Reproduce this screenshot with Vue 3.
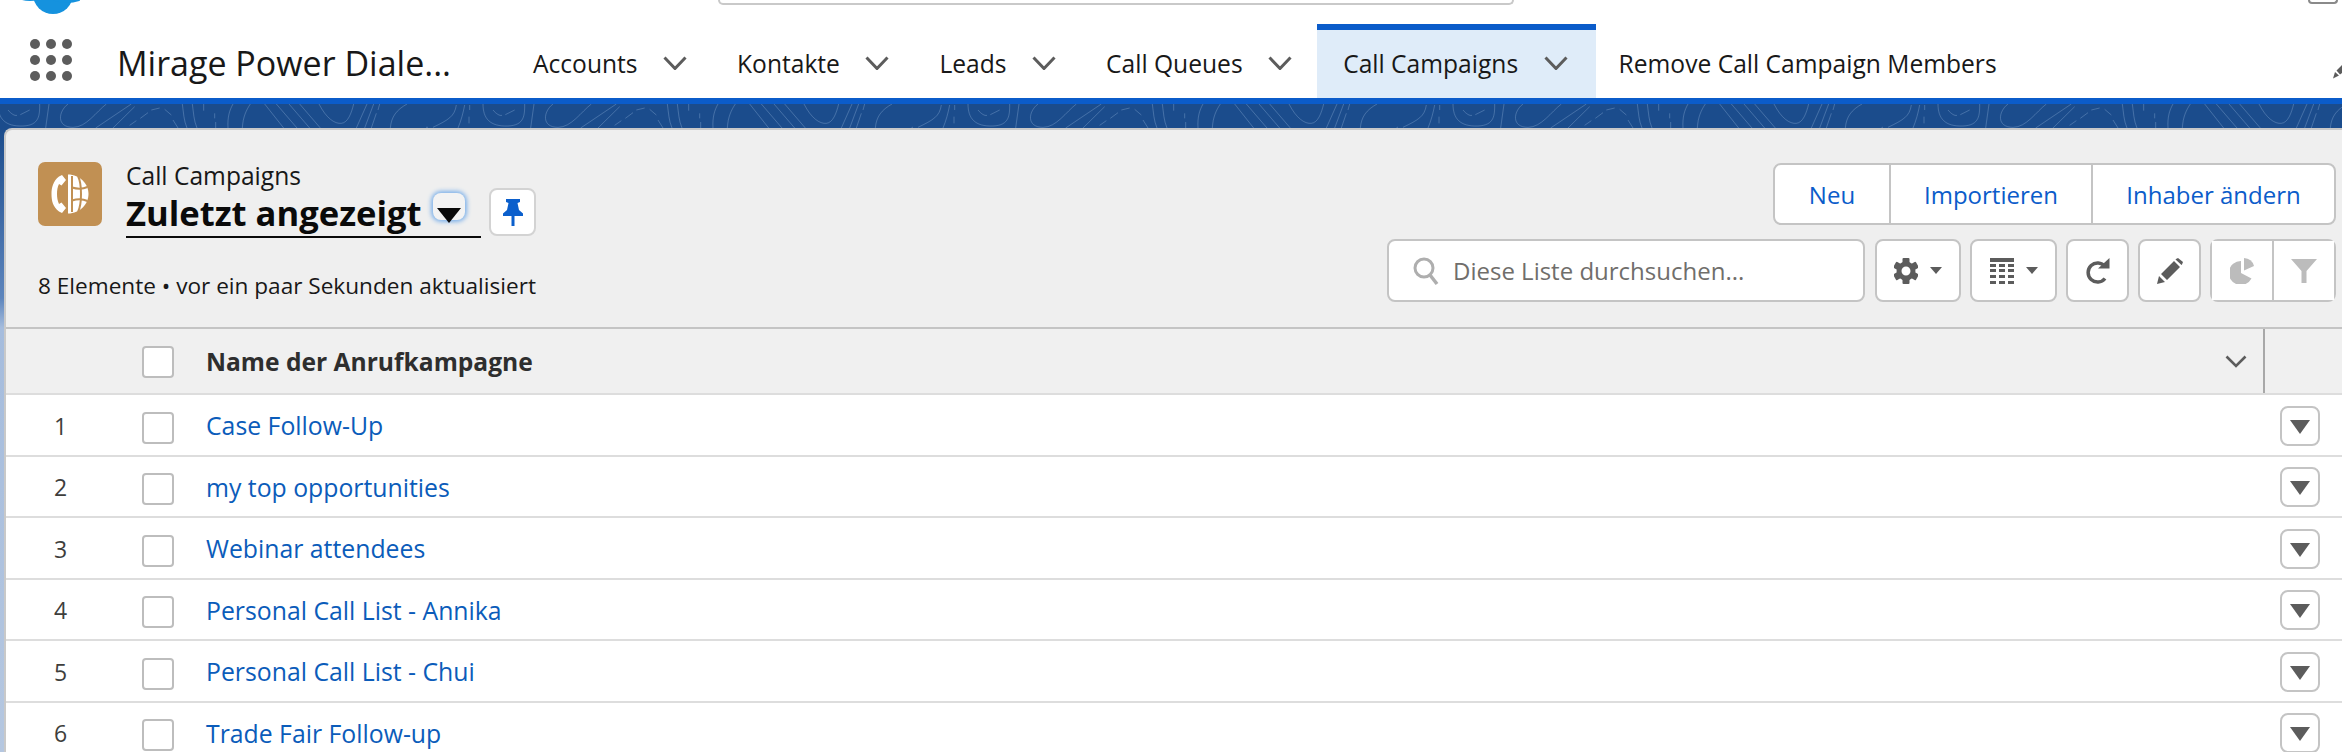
<script setup>
const navItems = [
  { label: 'Accounts', chevron: true },
  { label: 'Kontakte', chevron: true },
  { label: 'Leads', chevron: true },
  { label: 'Call Queues', chevron: true },
  { label: 'Call Campaigns', chevron: true, active: true }
]
const rows = [
  'Case Follow-Up',
  'my top opportunities',
  'Webinar attendees',
  'Personal Call List - Annika',
  'Personal Call List - Chui',
  'Trade Fair Follow-up'
]
const gearTeeth = [0, 60, 120, 180, 240, 300]
</script>

<template>
  <div class="page">
    <div class="top-strip">
      <svg class="logo" width="60" height="16" viewBox="0 0 60 16">
        <circle cx="33" cy="-6" r="20" fill="#1592de" />
        <ellipse cx="10" cy="-3" rx="12" ry="4" fill="#1592de" />
        <ellipse cx="47" cy="-3" rx="16" ry="6" fill="#1592de" />
      </svg>
      <div class="global-search"></div>
      <div class="avatar-arc"></div>
    </div>

    <nav class="nav">
      <svg class="launcher" width="44" height="44" viewBox="0 0 44 44">
        <g fill="#5c5c5c">
          <circle cx="6" cy="6" r="5" /><circle cx="22" cy="6" r="5" /><circle cx="38" cy="6" r="5" />
          <circle cx="6" cy="22" r="5" /><circle cx="22" cy="22" r="5" /><circle cx="38" cy="22" r="5" />
          <circle cx="6" cy="38" r="5" /><circle cx="22" cy="38" r="5" /><circle cx="38" cy="38" r="5" />
        </g>
      </svg>
      <div class="app-name">Mirage Power Diale...</div>
      <a v-for="item in navItems" :key="item.label" class="nav-item" :class="{ active: item.active }">
        <span>{{ item.label }}</span>
        <svg class="chev" width="24" height="14" viewBox="0 0 24 14">
          <path d="M1.500 1.500 12 12.500 22.500 1.500" fill="none" stroke="#5c5c5c" stroke-width="3" />
        </svg>
      </a>
      <a class="nav-item plain"><span>Remove Call Campaign Members</span></a>
      <svg class="nav-edit" width="9" height="16" viewBox="0 0 9 16">
        <path d="M0 15.500 2 9 6 12.500Z M3.500 7.500 9 2V10L7 11.500Z" fill="#5c5c5c" />
      </svg>
    </nav>

    <div class="brand-line"></div>

    <svg class="banner" width="2342" height="24">
      <defs>
        <pattern id="woodgrain" patternUnits="userSpaceOnUse" width="1455" height="72" patternTransform="translate(428 0) scale(0.33333)">
          <g transform="translate(-40 -12)" fill="none" stroke="#7fa3cc" stroke-opacity="0.42" stroke-width="3">
            <path d="M55 82C100 60 120 50 125 15" />
            <path d="M150 15C145 40 140 60 130 84" />
            <path d="M165 15V30M163 50V70" />
            <path d="M205 12C205 55 225 80 280 78C330 76 330 45 330 12" />
            <path d="M235 30C245 42 255 48 262 46M272 44 300 30" />
            <path d="M358 12 348 84" />
            <path d="M415 12C385 35 380 82 430 82C470 82 500 35 530 12" />
            <path d="M498 84 605 12M550 84 615 20" />
            <path d="M600 76 620 62M632 55 655 38M665 30 690 24M705 28 725 45M730 60 745 84" />
            <path d="M758 12C762 40 762 60 772 84M788 12C792 40 792 60 802 84" />
            <path d="M822 12V32M855 40V55M858 66V84" />
            <path d="M895 84C893 50 900 30 910 12M938 84C940 50 950 30 962 12" />
            <path d="M1005 12 1062 84M1040 12 1102 84M1078 12 1140 84M1110 12 1172 84" />
            <path d="M1168 12C1190 55 1215 72 1235 70C1255 68 1265 40 1272 12" />
            <path d="M1280 84 1312 12M1305 84 1332 12M1325 84 1340 40M1345 30 1350 12" />
            <path d="M1382 84C1385 50 1400 30 1432 12" />
            <path d="M1490 84 1530 60" />
          </g>
        </pattern>
      </defs>
      <rect width="2342" height="24" fill="#1b4c8c" />
      <rect width="2342" height="24" fill="url(#woodgrain)" />
    </svg>

    <main class="stage">
      <section class="panel">
        <header class="list-head">
          <div class="head-left">
            <div class="title-row">
              <span class="object-icon">
                <svg width="38" height="40" viewBox="0 0 38 40">
                  <path d="M11 1 8 2.500C2 7 .500 14 .500 20C.500 27 2 33 8 37.500L11 39 15 34 10.500 28.500 8 30C6.500 27 6 23 6 20C6 16 6.500 13 8 10L10.500 11.500 15 6Z" fill="#fff" />
                  <path d="M17 .500C29 .500 37.500 10 37.500 20C37.500 30 29 39.500 17 39.500Z" fill="#fff" />
                  <path d="M27 2C31 10 31 30 27 38" fill="none" stroke="#c19053" stroke-width="2" />
                  <path d="M21 13.500C26 15 32 15 36.500 13M21 26.500C26 25 32 25 36.500 27" fill="none" stroke="#c19053" stroke-width="2" />
                  <path d="M21 2V38" fill="none" stroke="#c19053" stroke-width="2" />
                </svg>
              </span>
              <div class="title-block">
                <div class="object-name">Call Campaigns</div>
                <div class="view-line">
                  <h1 class="view-name">Zuletzt angezeigt</h1>
                  <span class="view-menu">
                    <svg width="24" height="15" viewBox="0 0 24 15"><path d="M0 0H24L12 15Z" fill="#0a0a0a" /></svg>
                  </span>
                </div>
              </div>
              <button class="pin-btn">
                <svg width="20" height="27" viewBox="0 0 20 27">
                  <path d="M3 0H17V3L14.500 4 16 11 20 14.500V17H11.500V27H8.500V17H0V14.500L4 11 5.500 4 3 3Z" fill="#0b5fcc" />
                </svg>
              </button>
            </div>
            <div class="status">8 Elemente • vor ein paar Sekunden aktualisiert</div>
          </div>

          <div class="head-right">
            <div class="actions">
              <a class="act act-new">Neu</a>
              <a class="act act-import">Importieren</a>
              <a class="act act-owner">Inhaber ändern</a>
            </div>
            <div class="toolbar">
              <div class="search">
                <svg width="26" height="30" viewBox="0 0 26 30">
                  <circle cx="11" cy="12" r="9" fill="none" stroke="#aeaeae" stroke-width="3" />
                  <path d="M17 19 24 28" stroke="#aeaeae" stroke-width="3.500" />
                </svg>
                <span>Diese Liste durchsuchen...</span>
              </div>
              <button class="tool tool-gear">
                <svg width="24" height="26" viewBox="-12 -13 24 26">
                  <g fill="#5c5c5c">
                    <rect v-for="a in gearTeeth" :key="a" x="-3.500" y="-13" width="7" height="6" rx="1" :transform="`rotate(${a})`" />
                  </g>
                  <circle r="7" fill="none" stroke="#5c5c5c" stroke-width="5" />
                </svg>
                <svg class="caret" width="12" height="7" viewBox="0 0 12 7"><path d="M0 0H12L6 7Z" fill="#5c5c5c" /></svg>
              </button>
              <button class="tool tool-table">
                <svg width="24" height="26" viewBox="0 0 24 26">
                  <path d="M0 0H24V4H0Z" fill="#5c5c5c" />
                  <g fill="#5c5c5c">
                    <path d="M0 6H6V9H0ZM9 6H15V9H9ZM18 6H24V9H18Z" />
                    <path d="M0 11H6V14H0ZM9 11H15V14H9ZM18 11H24V14H18Z" />
                    <path d="M0 17H6V20H0ZM9 17H15V20H9ZM18 17H24V20H18Z" />
                    <path d="M0 23H6V26H0ZM9 23H15V26H9ZM18 23H24V26H18Z" />
                  </g>
                </svg>
                <svg class="caret" width="12" height="7" viewBox="0 0 12 7"><path d="M0 0H12L6 7Z" fill="#5c5c5c" /></svg>
              </button>
              <button class="tool tool-icon">
                <svg width="24" height="26" viewBox="0 0 24 26">
                  <path d="M19 8.500A9.500 9.500 0 1 0 19 20.500" fill="none" stroke="#5c5c5c" stroke-width="3.500" />
                  <path d="M12 10.500H23.500V0Z" fill="#5c5c5c" />
                </svg>
              </button>
              <button class="tool tool-icon">
                <svg width="26" height="26" viewBox="0 0 26 26">
                  <path d="M0 26 2 18 8 24ZM4 16 17 3 23 9 10 22ZM19 1 21 0 26 4 25 6.500 24.500 7 18.500 1.500Z" fill="#5c5c5c" />
                </svg>
              </button>
              <div class="tool-pair">
                <button class="tool-half">
                  <svg width="24" height="26" viewBox="0 0 24 26">
                    <path d="M11 3V15L21.500 20.500A12 12 0 1 1 11 3Z" fill="#bcbcbc" />
                    <path d="M14 0A11 11 0 0 1 24 8L14 12.500Z" fill="#bcbcbc" />
                  </svg>
                </button>
                <button class="tool-half">
                  <svg width="26" height="24" viewBox="0 0 26 24">
                    <path d="M0 0H26L15.500 12V24H10.500V12Z" fill="#bcbcbc" />
                  </svg>
                </button>
              </div>
            </div>
          </div>
        </header>

        <div class="thead">
          <span></span>
          <span class="check"></span>
          <span class="col-title">Name der Anrufkampagne</span>
          <svg class="col-chev" width="22" height="13" viewBox="0 0 22 13">
            <path d="M1.500 1.500 11 11 20.500 1.500" fill="none" stroke="#5c5c5c" stroke-width="2.600" />
          </svg>
          <span class="col-end"></span>
        </div>

        <div v-for="(name, i) in rows" :key="name" class="trow">
          <span class="num">{{ i + 1 }}</span>
          <span class="check"></span>
          <a class="link">{{ name }}</a>
          <button class="row-menu">
            <svg width="20" height="14" viewBox="0 0 20 14"><path d="M0 0H20L10 14Z" fill="#5c5c5c" /></svg>
          </button>
        </div>
      </section>
    </main>
  </div>
</template>

<style>
html, body { margin: 0; padding: 0; background: #fff; overflow: hidden; }
</style>

<style scoped>
.page {
  width: 2342px;
  height: 752px;
  overflow: hidden;
  background: #fff;
  font-family: "Open Sans", "Noto Sans", sans-serif;
  color: #181818;
}
.top-strip { height: 16px; display: flex; align-items: flex-start; overflow: hidden; }
.logo { margin-left: 20px; flex: none; }
.global-search {
  flex: none;
  width: 796px;
  height: 5px;
  margin-left: 638px;
  box-sizing: border-box;
  border: 2px solid #c9c9c9;
  border-top: 0;
  border-radius: 0 0 8px 8px;
}
.avatar-arc {
  flex: none;
  width: 30px;
  height: 4px;
  margin-left: 794px;
  box-sizing: border-box;
  border: 2px solid #8a8a8a;
  border-top: 0;
  border-radius: 0 0 15px 15px;
}
.nav { height: 82px; display: flex; align-items: stretch; }
.launcher { flex: none; margin: 22px 0 0 29px; }
.app-name {
  flex: none;
  width: 391px;
  margin-left: 44px;
  padding-top: 24px;
  font-size: 34px;
  line-height: 46px;
  white-space: nowrap;
  color: #181818;
}
.nav-item {
  flex: none;
  margin-top: 8px;
  box-sizing: border-box;
  border-top: 6px solid transparent;
  display: flex;
  align-items: center;
  padding: 0 25px 2px;
  font-size: 24.600px;
}
.nav-item.active { background: #dfecf9; border-top-color: #0b5cca; padding: 0 28px 2px 26px; }
.nav-item.plain { padding: 0 0 2px 23px; }
.chev { margin-left: 25.500px; flex: none; }
.nav-edit { margin: 47px 0 0 auto; flex: none; }
.brand-line { height: 6px; background: #0b5cca; }
.banner { display: block; }
.stage {
  height: 624px;
  padding-left: 4px;
  background: linear-gradient(180deg, #1b4c8c 0, #5d85bd 170px, #a5bcdd 200px, #b5c7e0 100%);
}
.panel {
  height: 640px;
  box-sizing: border-box;
  background: #efefef;
  border-top: 2px solid #c9c9c9;
  border-left: 2px solid #c9c9c9;
  border-top-left-radius: 8px;
}
.list-head {
  height: 197px;
  display: flex;
  justify-content: space-between;
  padding: 0 6px 0 32px;
}
.title-row { display: flex; align-items: flex-start; margin-top: 32px; }
.object-icon {
  flex: none;
  width: 64px;
  height: 64px;
  border-radius: 7px;
  background: #c19053;
  display: flex;
  align-items: center;
  justify-content: center;
}
.title-block { flex: none; width: 355px; margin-left: 24px; }
.object-name { font-size: 24.600px; line-height: 30px; margin-top: -1px; margin-bottom: 1px; color: #181818; }
.view-line {
  position: relative;
  height: 46px;
  box-sizing: border-box;
  border-bottom: 2px solid #0a0a0a;
}
.view-name {
  margin: 0;
  font-size: 34.600px;
  line-height: 42px;
  font-weight: 700;
  color: #0a0a0a;
  white-space: nowrap;
}
.view-menu {
  position: absolute;
  left: 307px;
  top: 1px;
  width: 32px;
  height: 27px;
  box-sizing: border-box;
  border-radius: 8px;
  background: #f3f3f3;
  box-shadow: 0 0 4px 2px #7fb2ea;
  display: flex;
  justify-content: center;
  padding-top: 15px;
}
.pin-btn {
  flex: none;
  width: 47px;
  height: 48px;
  margin: 26px 0 0 8px;
  padding: 0;
  box-sizing: border-box;
  border: 2px solid #d3d3d3;
  border-radius: 8px;
  background: #fff;
  display: flex;
  align-items: center;
  justify-content: center;
}
.status { margin-top: 34px; font-size: 22.600px; line-height: 28px; color: #181818; white-space: nowrap; }
.head-right { display: flex; flex-direction: column; align-items: flex-end; padding-top: 33px; }
.actions {
  display: flex;
  height: 62px;
  box-sizing: border-box;
  border: 2px solid #c4c4c4;
  border-radius: 8px;
  background: #fff;
}
.act {
  box-sizing: border-box;
  display: flex;
  align-items: center;
  justify-content: center;
  font-size: 24px;
  color: #0b5cca;
  white-space: nowrap;
}
.act + .act { border-left: 2px solid #c4c4c4; }
.act-new { width: 114px; }
.act-import { width: 202px; }
.act-owner { width: 243px; }
.toolbar { display: flex; margin-top: 14px; height: 63px; }
.search {
  box-sizing: border-box;
  width: 478px;
  border: 2px solid #c4c4c4;
  border-radius: 8px;
  background: #fff;
  display: flex;
  align-items: center;
  padding-left: 24px;
  gap: 14px;
  font-size: 24px;
  color: #706e6b;
  white-space: nowrap;
}
.tool, .tool-pair, .tool-half {
  box-sizing: border-box;
  padding: 0;
  display: flex;
  align-items: center;
  justify-content: center;
  background: #fff;
}
.tool, .tool-pair { border: 2px solid #c4c4c4; border-radius: 8px; }
.tool-gear { width: 86px; margin-left: 10px; gap: 12px; }
.tool-table { width: 87px; margin-left: 9px; gap: 12px; }
.tool-icon { width: 63px; margin-left: 9px; }
.tool-pair { width: 126px; margin-left: 9px; }
.tool-half { flex: 1; height: 100%; border: 0; }
.tool-half + .tool-half { border-left: 2px solid #c4c4c4; }
.caret { flex: none; }
.thead, .trow {
  display: grid;
  box-sizing: border-box;
  align-items: center;
}
.thead {
  grid-template-columns: 136px 64px 1fr 22px 16px 79px;
  height: 68px;
  border-top: 2px solid #c4c4c4;
  border-bottom: 2px solid #dddddd;
  background: #f0f0f0;
}
.trow {
  grid-template-columns: 136px 64px 1fr 62px;
  height: 61.500px;
  padding-top: 2px;
  background: #fff;
  border-bottom: 2px solid #dddddd;
}
.check {
  display: block;
  width: 32px;
  height: 32px;
  box-sizing: border-box;
  border: 2px solid #bdbdbd;
  border-radius: 4px;
  background: #fff;
}
.trow .check { margin-top: 4px; }
.thead .check { margin-top: 2px; }
.col-title { font-size: 24.600px; font-weight: 700; color: #2e2e2e; white-space: nowrap; }
.col-chev { grid-column: 4; }
.col-end { grid-column: 6; height: 100%; border-left: 2px solid #a8a8a8; }
.num { text-align: center; padding-right: 27px; font-size: 23px; color: #3e3e3c; }
.link { font-size: 24.800px; color: #0b5cba; white-space: nowrap; margin-top: -1px; }
.row-menu {
  box-sizing: border-box;
  width: 40px;
  height: 40px;
  padding: 2px 0 0;
  border: 2px solid #c4c4c4;
  border-radius: 8px;
  background: #fff;
  display: flex;
  align-items: center;
  justify-content: center;
}
</style>
